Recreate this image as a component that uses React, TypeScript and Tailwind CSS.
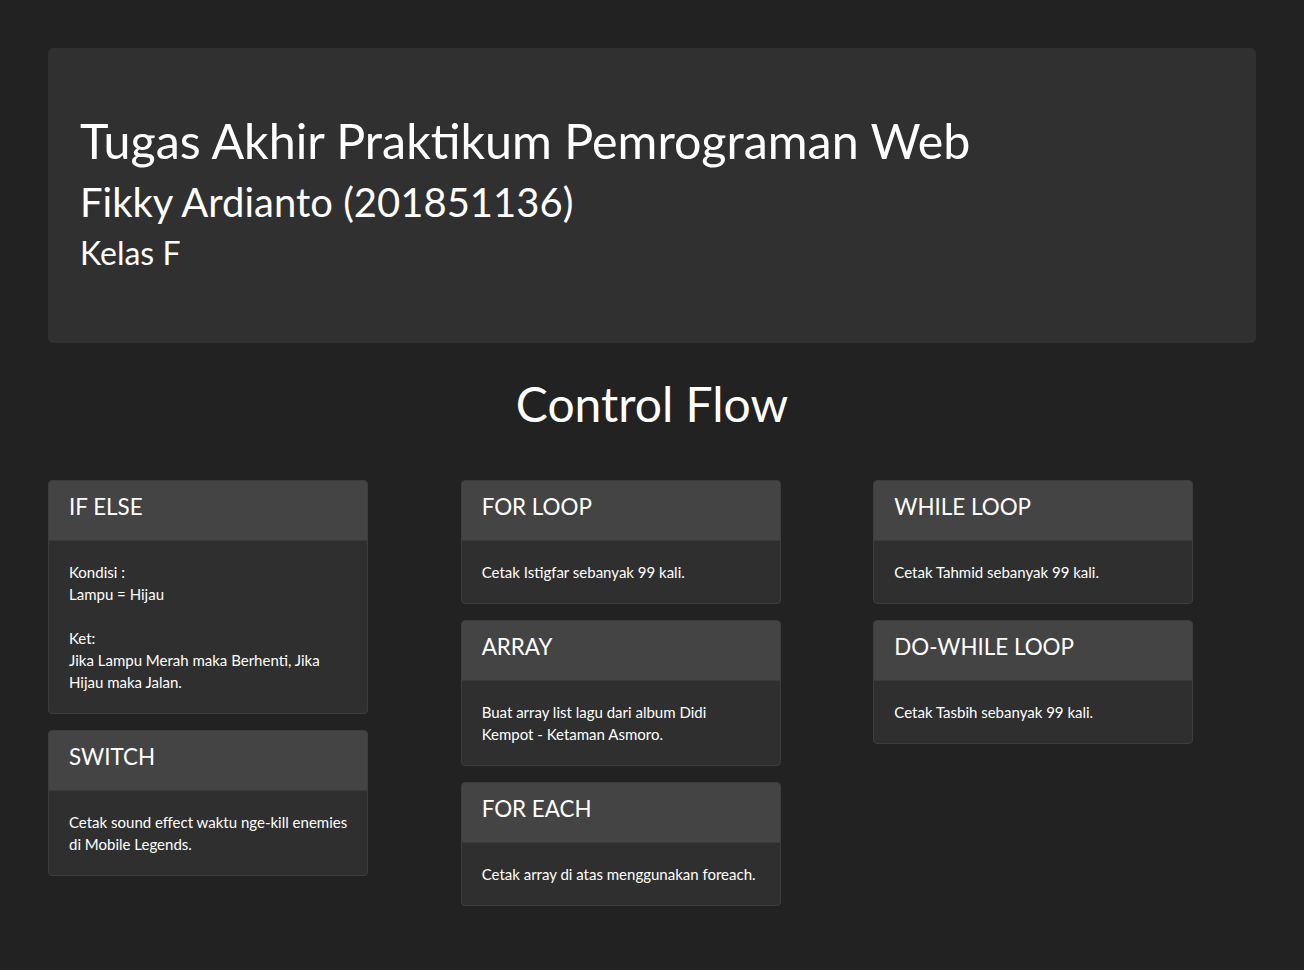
const cards: { title: string; body: string[] }[][] = [
  [
    {
      title: "IF ELSE",
      body: [
        "Kondisi :",
        "Lampu = Hijau",
        "",
        "Ket:",
        "Jika Lampu Merah maka Berhenti, Jika Hijau maka Jalan.",
      ],
    },
    {
      title: "SWITCH",
      body: ["Cetak sound effect waktu nge-kill enemies di Mobile Legends."],
    },
  ],
  [
    { title: "FOR LOOP", body: ["Cetak Istigfar sebanyak 99 kali."] },
    {
      title: "ARRAY",
      body: ["Buat array list lagu dari album Didi Kempot - Ketaman Asmoro."],
    },
    { title: "FOR EACH", body: ["Cetak array di atas menggunakan foreach."] },
  ],
  [
    { title: "WHILE LOOP", body: ["Cetak Tahmid sebanyak 99 kali."] },
    { title: "DO-WHILE LOOP", body: ["Cetak Tasbih sebanyak 99 kali."] },
  ],
];

function Card({ title, body }: { title: string; body: string[] }) {
  return (
    <div className="w-[320px] rounded-[4px] border border-[#3d3d3d] bg-[#2f2f2f] overflow-hidden">
      <div className="bg-[#444444] px-5 py-3 border-b border-[#3a3a3a]">
        <h4 className="text-[22.4px] leading-[27px] mb-2 text-white">{title}</h4>
      </div>
      <div className="pl-5 pr-[19px] py-5 text-[15px] leading-[22px] text-white">
        {body.map((line, i) =>
          line === "" ? <div key={i} className="h-[22px]" /> : <div key={i}>{line}</div>
        )}
      </div>
    </div>
  );
}

export default function App() {
  return (
    <div
      className="min-h-screen bg-[#222222] text-white p-12"
      style={{ fontFamily: "Lato, 'Noto Sans', sans-serif" }}
    >
      {/* Jumbotron */}
      <div className="bg-[#303030] rounded-[5px] px-8 pt-16 pb-[63px]">
        <h1 className="text-[48.4px] leading-[57.6px] mb-2">Tugas Akhir Praktikum Pemrograman Web</h1>
        <h2 className="text-[40px] leading-[48px] mb-2">Fikky Ardianto (201851136)</h2>
        <h3 className="text-[32px] leading-[38.4px] mb-2">Kelas F</h3>
      </div>

      <h1 className="text-center text-[48px] leading-[57.6px] mt-8">Control Flow</h1>

      <div className="flex -mx-[15px] mt-[47px]">
        {cards.map((col, i) => (
          <div key={i} className="w-1/3 px-[15px] flex flex-col gap-[16px]">
            {col.map((c) => (
              <Card key={c.title} title={c.title} body={c.body} />
            ))}
          </div>
        ))}
      </div>
    </div>
  );
}
